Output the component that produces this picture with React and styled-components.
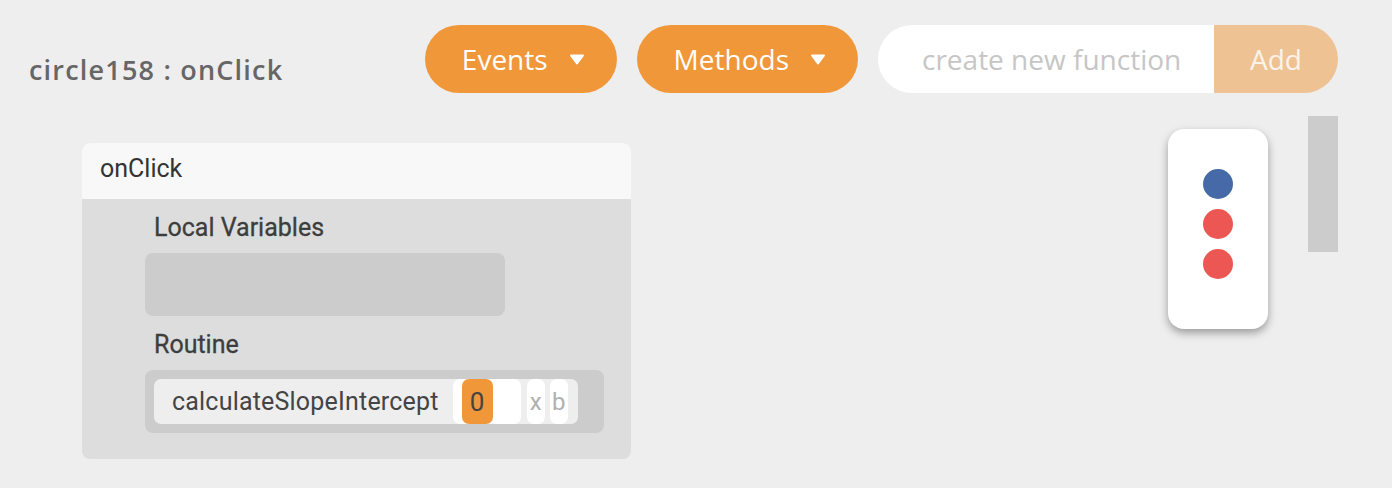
import React, { useState } from 'react';
import styled, { createGlobalStyle } from 'styled-components';

const GlobalStyle = createGlobalStyle`
  html, body {
    margin: 0;
    padding: 0;
    background: #eeeeee;
  }

  body {
    width: 1392px;
    height: 488px;
    overflow: hidden;
    font-family: 'Open Sans', 'Noto Sans', sans-serif;
  }
`;

const Page = styled('div')`
  display: flex;
  flex-direction: column;
  width: 1392px;
  height: 488px;
`;

const TopBar = styled('div')`
  display: flex;
  align-items: flex-start;
  padding: 25px 54px 0 29px;
  height: 68px;
`;

const Heading = styled('div')`
  margin-top: 27px;
  font-family: 'Open Sans', sans-serif;
  font-size: 27px;
  font-weight: 600;
  letter-spacing: 1.2px;
  color: #666666;
  line-height: 36px;
`;

const Actions = styled('div')`
  display: flex;
  align-items: center;
  gap: 20px;
  margin-left: auto;
`;

const Dropdown = styled('button')`
  display: flex;
  align-items: center;
  gap: 21px;
  height: 68px;
  padding: 0 32px 0 37px;
  border: none;
  border-radius: 34px;
  background: #f0973a;
  color: #ffffff;
  font-family: 'Open Sans', sans-serif;
  font-size: 28px;
  cursor: pointer;
`;

const NewFunction = styled('div')`
  display: flex;
  height: 68px;
  border-radius: 34px;
  overflow: hidden;
`;

const FunctionInput = styled('input')`
  width: 336px;
  box-sizing: border-box;
  padding: 0 0 0 44px;
  border: none;
  outline: none;
  background: #ffffff;
  font-family: 'Open Sans', sans-serif;
  font-size: 28px;
  color: #444444;

  &::placeholder {
    color: #c6c6c6;
  }
`;

const AddButton = styled('button')`
  width: 124px;
  border: none;
  background: #efc293;
  color: #fbf3ea;
  font-family: 'Open Sans', sans-serif;
  font-size: 28px;
  padding: 0;
  cursor: pointer;
`;

const Canvas = styled('div')`
  display: flex;
  align-items: flex-start;
  flex: 1;
  padding-left: 82px;
  padding-right: 54px;
`;

const FunctionCard = styled('div')`
  display: flex;
  flex-direction: column;
  width: 549px;
  margin-top: 50px;
  border-radius: 8px;
  overflow: hidden;
  background: #dddddd;
  font-family: Roboto, 'Liberation Sans', sans-serif;
  color: #444444;
`;

const CardHeader = styled('div')`
  display: flex;
  align-items: center;
  height: 56px;
  box-sizing: border-box;
  padding: 0 0 5px 18px;
  background: #f8f8f8;
  font-size: 25px;
  color: #333333;
`;

const CardBody = styled('div')`
  display: flex;
  flex-direction: column;
  padding: 0 27px 26px 63px;
`;

const SectionLabel = styled('div')`
  display: flex;
  align-items: center;
  height: 54px;
  padding: 2px 0 0 9px;
  box-sizing: border-box;
  font-size: 25px;
  color: #3d3d3d;
  -webkit-text-stroke: 0.3px #3d3d3d;
`;

const Slot = styled('div')`
  display: flex;
  align-items: center;
  width: ${(p) => p.$width}px;
  min-height: ${(p) => p.$height}px;
  box-sizing: border-box;
  padding: ${(p) => (p.$filled ? '9px 27px 9px 9px' : '0')};
  border-radius: 8px;
  background: #cccccc;
`;

const CallRow = styled('div')`
  display: flex;
  align-items: stretch;
  flex: 1;
  height: 45px;
  padding: 0 10px 0 18px;
  border-radius: 7px;
  background: #eeeeee;
`;

const CallName = styled('div')`
  display: flex;
  align-items: center;
  margin-right: 14px;
  font-size: 25px;
  letter-spacing: 0.2px;
  color: #444444;
`;

const ArgBox = styled('div')`
  display: flex;
  align-items: stretch;
  width: 68px;
  padding-left: 9px;
  box-sizing: border-box;
  border-radius: 7px;
  background: #ffffff;
`;

const ArgValue = styled('div')`
  display: flex;
  align-items: center;
  justify-content: center;
  width: 31px;
  border-radius: 7px;
  background: #f0973a;
  font-size: 26px;
  color: #444444;
`;

const ParamTag = styled('div')`
  display: flex;
  align-items: center;
  justify-content: center;
  width: 18px;
  margin-left: ${(p) => p.$gap}px;
  border-radius: 7px;
  background: #ffffff;
  font-size: 24px;
  color: #b0b0b0;
`;

const Spacer = styled('div')`
  flex: 1;
`;

const StatusPanel = styled('div')`
  display: flex;
  flex-direction: column;
  align-items: center;
  justify-content: center;
  gap: 10px;
  width: 100px;
  height: 200px;
  margin-top: 36px;
  padding-bottom: 10px;
  box-sizing: border-box;
  border-radius: 16px;
  background: #ffffff;
  box-shadow: 0 4px 9px rgba(0, 0, 0, 0.35);
`;

const Dot = styled('div')`
  width: 30px;
  height: 30px;
  border-radius: 50%;
  background: ${(p) => p.$color};
`;

const ScrollThumb = styled('div')`
  width: 30px;
  height: 136px;
  margin: 23px 0 0 40px;
  background: #cccccc;
`;

function Caret() {
  return (
    <svg width="16" height="11" viewBox="0 0 16 11">
      <path
        d="M2 1.5 L14 1.5 L8 9.5 Z"
        fill="#ffffff"
        stroke="#ffffff"
        strokeWidth="2"
        strokeLinejoin="round"
      />
    </svg>
  );
}

export default function App() {
  const [name, setName] = useState('');
  const [dots] = useState(['#4669a8', '#ec5754', '#ec5754']);

  return (
    <Page>
      <GlobalStyle />
      <TopBar>
        <Heading>circle158 : onClick</Heading>
        <Actions>
          <Dropdown>
            Events
            <Caret />
          </Dropdown>
          <Dropdown>
            Methods
            <Caret />
          </Dropdown>
          <NewFunction>
            <FunctionInput
              placeholder="create new function"
              value={name}
              onChange={(e) => setName(e.target.value)}
            />
            <AddButton>Add</AddButton>
          </NewFunction>
        </Actions>
      </TopBar>

      <Canvas>
        <FunctionCard>
          <CardHeader>onClick</CardHeader>
          <CardBody>
            <SectionLabel>Local Variables</SectionLabel>
            <Slot $width={360} $height={63} />
            <SectionLabel>Routine</SectionLabel>
            <Slot $width={459} $height={63} $filled>
              <CallRow>
                <CallName>calculateSlopeIntercept</CallName>
                <ArgBox>
                  <ArgValue>0</ArgValue>
                </ArgBox>
                <ParamTag $gap={6}>x</ParamTag>
                <ParamTag $gap={5}>b</ParamTag>
              </CallRow>
            </Slot>
          </CardBody>
        </FunctionCard>

        <Spacer />

        <StatusPanel>
          {dots.map((color, i) => (
            <Dot key={i} $color={color} />
          ))}
        </StatusPanel>
        <ScrollThumb />
      </Canvas>
    </Page>
  );
}
